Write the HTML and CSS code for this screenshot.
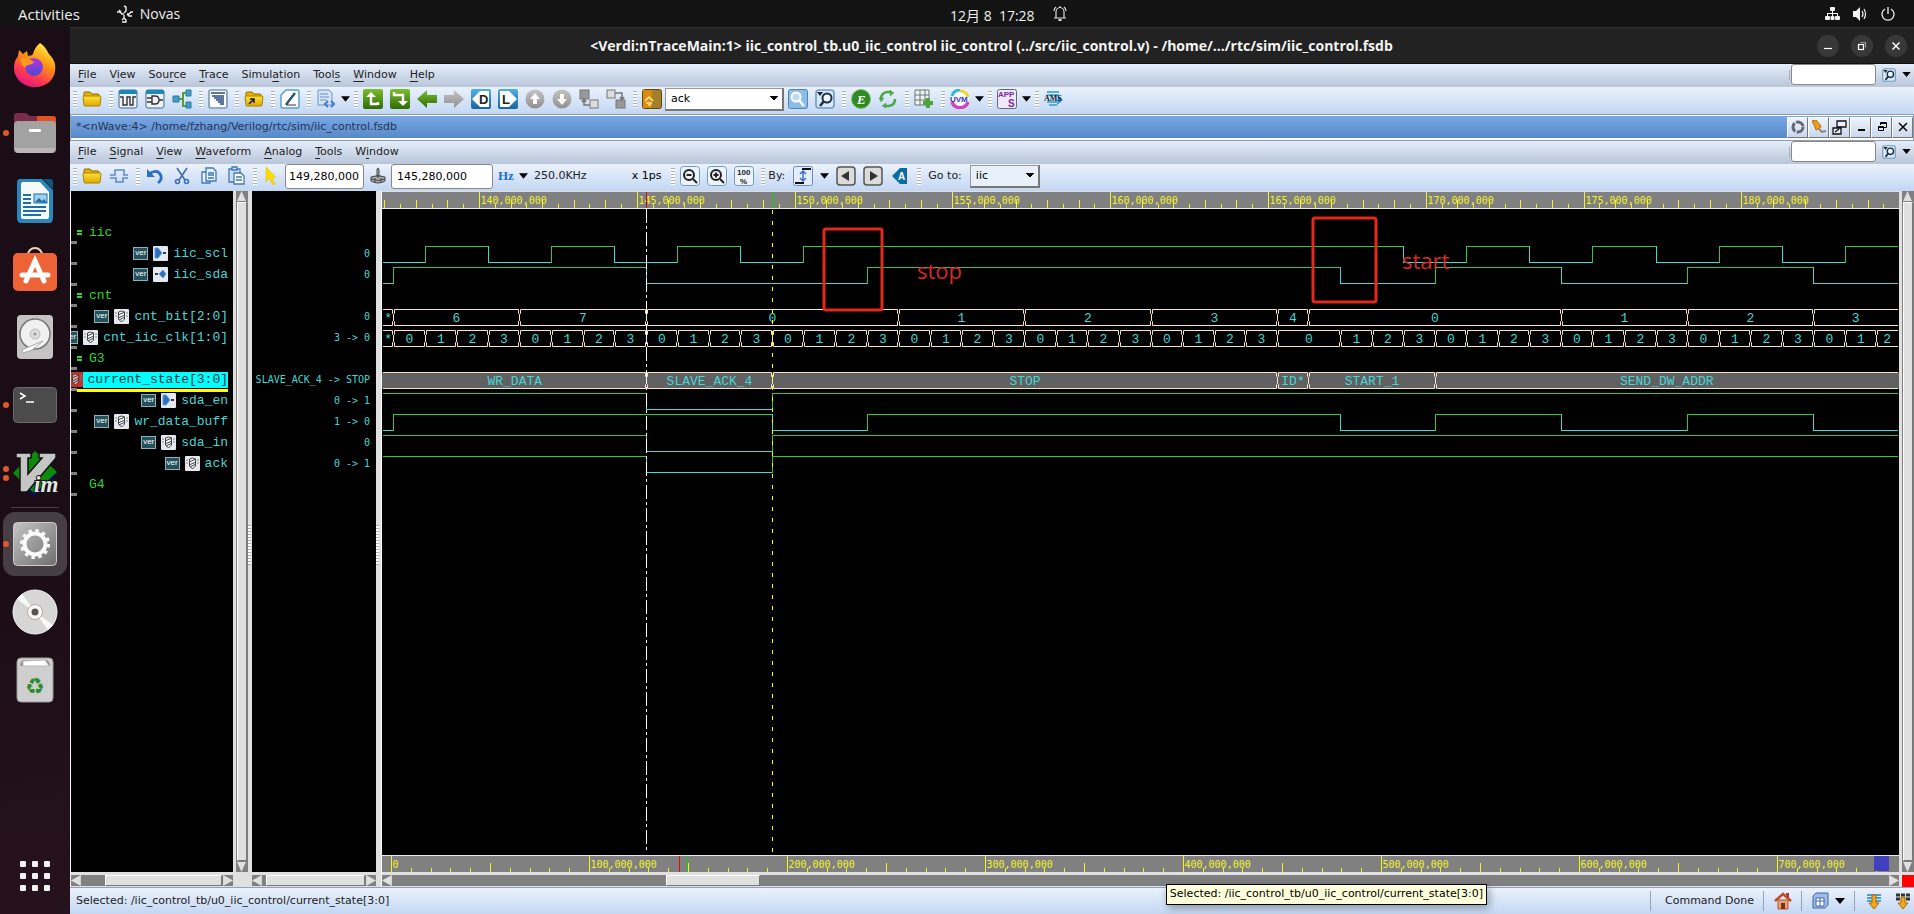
FILE: index.html
```html
<!DOCTYPE html>
<html lang="en">
<head>
<meta charset="utf-8">
<title>Verdi nWave</title>
<link rel="stylesheet" href="styles.css">
</head>
<body>
<svg class="defs" width="0" height="0" aria-hidden="true">
  <defs>
    <linearGradient id="gold" x1="0" y1="0" x2="0" y2="1"><stop offset="0" stop-color="#ffe23c"/><stop offset="1" stop-color="#e0a800"/></linearGradient>
    <linearGradient id="leaf" x1="0" y1="0" x2="0" y2="1"><stop offset="0" stop-color="#7bbf2e"/><stop offset="1" stop-color="#2f6b05"/></linearGradient>
    <linearGradient id="steel" x1="0" y1="0" x2="0" y2="1"><stop offset="0" stop-color="#c4c4c4"/><stop offset="1" stop-color="#8f8f8f"/></linearGradient>
    <linearGradient id="sky" x1="0" y1="0" x2="0" y2="1"><stop offset="0" stop-color="#4fb0ea"/><stop offset="1" stop-color="#1763a5"/></linearGradient>
    <linearGradient id="flame" x1="0.8" y1="0" x2="0.3" y2="1"><stop offset="0" stop-color="#fff44f"/><stop offset="0.4" stop-color="#ff980e"/><stop offset="0.75" stop-color="#ff3750"/><stop offset="1" stop-color="#e31587"/></linearGradient>
    <linearGradient id="globe" x1="0" y1="0" x2="0" y2="1"><stop offset="0" stop-color="#b833e1"/><stop offset="1" stop-color="#4a4ad0"/></linearGradient>
    <linearGradient id="panel" x1="0" y1="0" x2="1" y2="1"><stop offset="0" stop-color="#c4c4c4"/><stop offset="1" stop-color="#6e6e6e"/></linearGradient>
    <symbol id="folder" viewBox="0 0 20 20"><path d="M2 4q0-1 1-1h5l2 2h6q1 0 1 1v2H2z" fill="#e8b400" stroke="#8a6a00"/><path d="M1 8q0-1 1-1h16q1 0 1 1l-1 8q0 1-1 1H3q-1 0-1-1z" fill="url(#gold)" stroke="#a88200"/></symbol>
    <symbol id="find" viewBox="0 0 20 20"><rect x="1" y="1" width="18" height="18" rx="3" fill="#dce9f5" stroke="#6d9cc4" stroke-width="1.6"/><path d="M2 3h6L5 7z" fill="#223"/><circle cx="12" cy="9" r="4.500" fill="#fff" fill-opacity=".6" stroke="#1d3347" stroke-width="2"/><path d="M9 12l-4 5" stroke="#1d3347" stroke-width="2.6"/></symbol>
    <symbol id="caret" viewBox="0 0 10 6"><path d="M0 0h10L5 6z" fill="#000"/></symbol>
    <symbol id="reg" viewBox="0 0 15 15"><rect width="15" height="15" rx="1" fill="var(--chip)"/><path d="M4.500 3l3-1 3 1v7l-3 3-3-3z" fill="#fff" fill-opacity=".6" stroke="#444"/><path d="M4 6l7-3M4 9l7-3M5 11l6-3" stroke="#444"/><path d="M1 4h2M1 7h2M12 4h2M12 7h2" stroke="#888"/></symbol>
    <symbol id="port-out" viewBox="0 0 15 15"><rect width="15" height="15" rx="1" fill="var(--chip)"/><path d="M2 2h3l4 5-4 5H2z" fill="#2b6fbd" stroke="#5a9ae0"/><path d="M10 7h3" stroke="#000" stroke-width="1.500"/></symbol>
    <symbol id="port-io" viewBox="0 0 15 15"><rect width="15" height="15" rx="1" fill="var(--chip)"/><path d="M6 7l4-4 3 4-3 4z" fill="#2b6fbd" stroke="#5a9ae0"/><path d="M2 7h3" stroke="#000" stroke-width="1.500"/></symbol>
  </defs>
</svg>

<header class="topbar">
  <button class="top-item activities">Activities</button>
  <button class="top-item app-name">
    <svg width="16" height="18" viewBox="0 0 16 18" fill="none" stroke="#eee" stroke-width="1.400"><path d="M7 1l2 1v4l-2 2M0 7h3l2 2h2M2 5l2 2M10 9h2l2-2h2M10 9l2 2h3M7 10v3l-2 2M7 13l2 2v2H5"/></svg>
    Novas</button>
  <div class="clock"><time>12月 8&nbsp; 17:28</time>
    <svg width="14" height="17" viewBox="0 0 14 17" fill="none" stroke="#ddd" stroke-width="1.200"><path d="M1 13h12M3 13V7a4 4.500 0 0 1 8 0v6M1 6a5 5 0 0 1 2-4M13 6a5 5 0 0 0-2-4M6 2h2"/><path d="M5.500 15h3" stroke-width="2"/></svg>
  </div>
  <div class="tray">
    <svg width="15" height="14" viewBox="0 0 15 14" fill="#f2f2f2"><rect x="5" y="0" width="5" height="4" rx="1"/><rect x="0" y="9" width="5" height="4" rx="1"/><rect x="5.500" y="9" width="4" height="4" rx="1"/><rect x="10" y="9" width="5" height="4" rx="1"/><path d="M7 4h1v2h5v3h-1V7H8v2H7V7H3v2H2V6h5z"/></svg>
    <svg width="15" height="14" viewBox="0 0 15 14" fill="#f2f2f2"><path d="M0 4h3l4-4v14l-4-4H0z"/><path d="M9 4q2 3 0 6M11 2q3 5 0 10" fill="none" stroke="#f2f2f2" stroke-width="1.200"/></svg>
    <svg width="14" height="14" viewBox="0 0 14 14" fill="none" stroke="#f2f2f2" stroke-width="1.300"><path d="M4 2a6 6 0 1 0 6 0M7 0v7"/></svg>
  </div>
</header>

<div class="desktop">
  <nav class="dock" aria-label="Dock">
    <button class="dock-item" aria-label="Firefox"><svg width="44" height="46" viewBox="0 0 44 46"><path d="M27 1c6 4 7 8 9 11 5 5 7 10 6 17-1 9-9 16-20 16S1 37 1 26c0-6 2-9 4-12l1-6 4 4 4-3 1 5c3-1 4 0 5-2 1-4 3-8 7-11z" fill="url(#flame)"/><circle cx="21" cy="25" r="9" fill="url(#globe)"/><path d="M7 17c6-3 9 0 14 3-1 3-6 2-8 4-1 3-2 1-3 0s-2-4-3-7z" fill="#ff9a1c"/></svg></button>
    <button class="dock-item running" aria-label="Files"><svg width="44" height="42" viewBox="0 0 44 42"><path d="M1 4q0-3 3-3h9l4 3h23q3 0 3 3v12H1z" fill="#7a2a4a"/><path d="M24 4h16q3 0 3 3v12H24z" fill="#e2511f"/><rect x="1" y="9" width="42" height="32" rx="4" fill="#a2a2a2"/><path d="M2 36h40q0 5-4 5H6q-4 0-4-5z" fill="#b8b8b8"/><rect x="16" y="17" width="12" height="3" rx="1" fill="#fff"/></svg></button>
    <button class="dock-item" aria-label="Writer"><svg width="38" height="46" viewBox="0 0 38 46"><path d="M4 1h22l11 11v28q0 5-4 5H5q-4 0-4-5V5q0-4 3-4z" fill="#2a86bb"/><path d="M6 4h18l9 10v24q0 3-2 3H7q-2 0-2-2V6z" fill="#f6f9fb"/><path d="M27 1h7q3 0 3 3v7z" fill="#0d567f"/><rect x="18" y="16" width="13" height="9" fill="#9fd0f2" stroke="#1d6fa5"/><path d="M19 24l4-4 3 3 2-2 3 4z" fill="#1d6fa5"/><path d="M7 17h8M7 21h8M7 25h8M7 29h23M7 33h23M7 37h18" stroke="#1d6fa5" stroke-width="2"/></svg></button>
    <button class="dock-item" aria-label="Software"><svg width="44" height="44" viewBox="0 0 44 44"><path d="M15 8a7 7 0 0 1 14 0" fill="none" stroke="#ecd5b4" stroke-width="2"/><rect y="6" width="44" height="38" rx="5" fill="#ed6335"/><path d="M13 34l9-20 9 20M9 28h26" fill="none" stroke="#fff" stroke-width="5" stroke-linecap="round"/></svg></button>
    <button class="dock-item" aria-label="Disks"><svg width="38" height="46" viewBox="0 0 38 46"><rect x="1" y="1" width="36" height="44" rx="4" fill="#c4c4c4"/><circle cx="19" cy="20" r="15" fill="#f1f1f1" stroke="#777" stroke-width="1.500"/><circle cx="19" cy="20" r="5" fill="#ddd" stroke="#bbb"/><circle cx="19" cy="20" r="1.500" fill="#999"/><path d="M7 39l9-3 11-9-12 5-9 4z" fill="#fff" stroke="#aaa"/></svg></button>
    <button class="dock-item running" aria-label="Terminal"><svg width="44" height="36" viewBox="0 0 44 36"><rect x="0.500" y="0.500" width="43" height="35" rx="4" fill="#4b4b4b" stroke="#6a6a6a"/><path d="M7 6l5 3-5 3M13 15h8" fill="none" stroke="#fff" stroke-width="1.500"/></svg></button>
    <button class="dock-item running twice" aria-label="Vim"><svg width="46" height="46" viewBox="0 0 46 46"><path d="M23 1l22 21-22 23L1 23z" fill="#0d8a0d"/><path d="M10 34l13 11 20-20" fill="none" stroke="#00106a" stroke-width="2"/><path d="M4 3h15v5h-3v16L30 8h-3V3h17v5L15 42H8V8H4z" fill="#c6c6c6" stroke="#111" stroke-width="1.500"/><text class="vim" x="22" y="42">im</text></svg></button>
    <hr class="dock-rule">
    <button class="dock-item running active" aria-label="Settings"><svg width="44" height="44" viewBox="0 0 44 44"><rect x="0.500" y="0.500" width="43" height="43" rx="4" fill="url(#panel)" stroke="#ccc"/><circle cx="22" cy="22" r="10.500" fill="none" stroke="#fafafa" stroke-width="4"/><circle cx="22" cy="22" r="13.500" fill="none" stroke="#fafafa" stroke-width="3" stroke-dasharray="3.500 3.568"/></svg></button>
    <button class="dock-item" aria-label="Disc"><svg width="46" height="46" viewBox="0 0 46 46"><circle cx="23" cy="23" r="22" fill="#d6d6d6" stroke="#f4f4f4"/><path d="M23 23L5 10l5-5zM23 23l18 13-5 5z" fill="#fafafa"/><circle cx="23" cy="23" r="7.500" fill="#f8f8f8" stroke="#b9ab9a"/><circle cx="23" cy="23" r="3.500" fill="#555"/></svg></button>
    <button class="dock-item" aria-label="Trash"><svg width="38" height="46" viewBox="0 0 38 46"><rect x="1" y="1" width="36" height="44" rx="4" fill="#cfcfcf" stroke="#9a9a9a"/><path d="M4 9q1-6 4-6h22q3 0 4 6z" fill="#8d8d8d"/><path d="M7 4l22-1 4 6H7z" fill="#fff" stroke="#bbb"/><text class="recycle" x="19" y="37">♻</text></svg></button>
    <button class="dock-item apps" aria-label="Show applications"><svg width="30" height="30" viewBox="0 0 30 30" fill="#f2f2f2"><rect width="6" height="6" rx="1"/><rect x="12" width="6" height="6" rx="1"/><rect x="24" width="6" height="6" rx="1"/><rect y="12" width="6" height="6" rx="1"/><rect x="12" y="12" width="6" height="6" rx="1"/><rect x="24" y="12" width="6" height="6" rx="1"/><rect y="24" width="6" height="6" rx="1"/><rect x="12" y="24" width="6" height="6" rx="1"/><rect x="24" y="24" width="6" height="6" rx="1"/></svg></button>
  </nav>

  <main class="window">
    <div class="titlebar">
      <h1>&lt;Verdi:nTraceMain:1&gt; iic_control_tb.u0_iic_control iic_control (../src/iic_control.v) - /home/.../rtc/sim/iic_control.fsdb</h1>
      <div class="controls">
        <button aria-label="Minimize"><svg width="22" height="22" viewBox="0 0 22 22"><path d="M7 13.500h8" stroke="#fff" stroke-width="1.200"/></svg></button>
        <button aria-label="Restore"><svg width="22" height="22" viewBox="0 0 22 22" fill="none" stroke="#fff" stroke-width="1.200"><rect x="7.500" y="9.500" width="5" height="5"/><path d="M9.500 7.500h5v5" stroke="#999"/></svg></button>
        <button aria-label="Close"><svg width="22" height="22" viewBox="0 0 22 22"><path d="M7.500 7.500l7 7m0-7l-7 7" stroke="#fff" stroke-width="1.500"/></svg></button>
      </div>
    </div>

    <div class="menubar">
      <button><u>F</u>ile</button><button>V<u>i</u>ew</button><button>Sou<u>r</u>ce</button><button><u>T</u>race</button><button>Simul<u>a</u>tion</button><button>Tool<u>s</u></button><button><u>W</u>indow</button><button><u>H</u>elp</button>
      <div class="quick"><i class="bar"></i><input type="text" aria-label="Search commands"><svg width="14" height="14"><use href="#find"/></svg><svg width="9" height="5"><use href="#caret"/></svg></div>
    </div>

    <div class="toolbar">
      <i class="grip"></i>
      <button aria-label="Open"><svg width="20" height="20"><use href="#folder"/></svg></button>
      <i class="grip"></i>
      <button aria-label="New waveform"><svg width="20" height="20" viewBox="0 0 20 20"><rect x="1" y="1" width="18" height="18" rx="2" fill="#eef3f7" stroke="#3c6d8c"/><path d="M1 1h18v4H1z" fill="#2186b5"/><path d="M2 8h3v8h4V8h3v8h3V8h3" fill="none" stroke="#333" stroke-width="1.400"/></svg></button>
      <button aria-label="New schematic"><svg width="20" height="20" viewBox="0 0 20 20"><rect x="1" y="1" width="18" height="18" rx="2" fill="#eef3f7" stroke="#3c6d8c"/><path d="M1 1h18v4H1z" fill="#2186b5"/><path d="M7 7h3q4 0 4 4t-4 4H7zM2 9h5M2 13h5M14 11h4" fill="none" stroke="#333" stroke-width="1.400"/></svg></button>
      <button aria-label="Hierarchy"><svg width="20" height="20" viewBox="0 0 20 20"><path d="M5 10h5M15 4h-4v13h4" fill="none" stroke="#5b9b3b" stroke-width="2"/><path d="M1 7h6v6H1zM14 1h5v6h-5zM14 13h5v6h-5z" fill="#3f9fc6" stroke="#2a7ca0"/></svg></button>
      <i class="grip"></i>
      <button aria-label="Message"><svg width="20" height="20" viewBox="0 0 20 20"><rect x="1" y="1" width="18" height="18" rx="2" fill="#fff" stroke="#7798b4" stroke-width="1.600"/><path d="M3 4h14M4 7h12M6 9h10M8 11h8M10 13h6M12 15h4" stroke="#2c4b7c" stroke-width="1.300"/></svg></button>
      <i class="grip"></i>
      <button aria-label="Open file list"><svg width="20" height="20"><use href="#folder"/><path d="M5 15l5-5M6 10h4v4" fill="none" stroke="#222" stroke-width="1.600"/></svg></button>
      <i class="grip"></i>
      <button aria-label="Edit"><svg width="20" height="20" viewBox="0 0 20 20"><path d="M6 1h11q2 0 2 2v14q0 2-2 2H3q-2 0-2-2V6z" fill="#fff" stroke="#5ba0ca" stroke-width="1.500"/><path d="M15 4L8 13l-2 3" stroke="#24577c" stroke-width="2.400"/><path d="M7 16h9" stroke="#333"/></svg></button>
      <i class="grip"></i>
      <button aria-label="Source"><svg width="20" height="20" viewBox="0 0 20 20"><path d="M2 1h11l3 3v12H2z" fill="#d5e3f4" stroke="#6b94c4"/><path d="M4 5h8M4 8h9M4 11h7" stroke="#6b94c4"/><path d="M12 12l-3 3 3 3M15 12l3 3-3 3" fill="none" stroke="#3d7cc9" stroke-width="2"/></svg></button>
      <svg class="caret" width="9" height="6"><use href="#caret"/></svg>
      <i class="grip"></i>
      <button aria-label="Driver scope"><svg width="20" height="20" viewBox="0 0 20 20"><rect width="20" height="20" rx="2" fill="url(#leaf)"/><path d="M8 6v9h6M15 13v3" fill="none" stroke="#fff" stroke-width="2.400"/><path d="M3 8l5-5 5 5z" fill="#fff"/></svg></button>
      <button aria-label="Load scope"><svg width="20" height="20" viewBox="0 0 20 20"><rect width="20" height="20" rx="2" fill="url(#leaf)"/><path d="M4 3v3h9v7" fill="none" stroke="#fff" stroke-width="2.400"/><path d="M8 12h10l-5 5z" fill="#fff"/></svg></button>
      <button aria-label="Back"><svg width="20" height="20" viewBox="0 0 20 20"><path d="M0 10l10-9v5h10v8H10v5z" fill="url(#leaf)"/></svg></button>
      <button aria-label="Forward"><svg width="20" height="20" viewBox="0 0 20 20"><path d="M20 10L10 1v5H0v8h10v5z" fill="url(#steel)"/></svg></button>
      <button aria-label="Driver"><svg width="20" height="20" viewBox="0 0 20 20"><rect width="20" height="20" rx="2" fill="url(#sky)"/><path d="M1 10l8-8h9v16H9z" fill="#fff"/><text class="glyph" x="8" y="15">D</text></svg></button>
      <button aria-label="Load"><svg width="20" height="20" viewBox="0 0 20 20"><rect width="20" height="20" rx="2" fill="url(#sky)"/><path d="M19 10l-8-8H2v16h9z" fill="#fff"/><text class="glyph" x="4" y="15">L</text></svg></button>
      <button aria-label="Up"><svg width="20" height="20" viewBox="0 0 20 20"><circle cx="10" cy="10" r="9.500" fill="url(#steel)"/><path d="M10 4l5 6h-3v5H8v-5H5z" fill="#fff"/></svg></button>
      <button aria-label="Down"><svg width="20" height="20" viewBox="0 0 20 20"><circle cx="10" cy="10" r="9.500" fill="url(#steel)"/><path d="M10 16l5-6h-3V5H8v5H5z" fill="#fff"/></svg></button>
      <button aria-label="Previous instance"><svg width="20" height="20" viewBox="0 0 20 20" fill="none" stroke="#777"><rect x="1" y="1" width="9" height="9" fill="#999"/><rect x="11" y="11" width="8" height="8" fill="#ddd"/><path d="M5 10v6h6M3 13l2-3 2 3" stroke-width="1.500"/></svg></button>
      <button aria-label="Next instance"><svg width="20" height="20" viewBox="0 0 20 20" fill="none" stroke="#777"><rect x="1" y="1" width="8" height="8" fill="#ddd"/><rect x="10" y="11" width="9" height="8" fill="#999"/><path d="M9 4h7v7M14 8l2 3 2-3" stroke-width="1.500"/></svg></button>
      <i class="grip"></i>
      <button aria-label="Bookmark"><svg width="20" height="20" viewBox="0 0 20 20"><rect x="0.500" y="0.500" width="19" height="19" rx="2" fill="#a5802a" stroke="#5e4712"/><path d="M1 1h9v18H1z" fill="#d98d0c"/><path d="M3 12l4-4 4 4M4 14h6M6 16h3" fill="none" stroke="#ffe9a0" stroke-width="1.500"/></svg></button>
      <select class="combo find-combo" aria-label="Find string"><option>ack</option></select>
      <button aria-label="Search"><svg width="20" height="20" viewBox="0 0 20 20"><rect x="0.500" y="0.500" width="19" height="19" rx="2" fill="#8cbde6" stroke="#4c83b5"/><circle cx="8" cy="8" r="4.500" fill="#b9dbf5" stroke="#fff" stroke-width="2"/><path d="M11 11l5 6" stroke="#fff" stroke-width="2.500"/></svg></button>
      <button aria-label="Search options"><svg width="20" height="20"><use href="#find"/></svg></button>
      <i class="grip"></i>
      <button aria-label="Emulation"><svg width="20" height="20" viewBox="0 0 20 20"><circle cx="10" cy="10" r="9.500" fill="#2f8a22" stroke="#7cc46d"/><text class="glyph light slant" x="6" y="15">E</text></svg></button>
      <button aria-label="Reload"><svg width="20" height="20" viewBox="0 0 20 20" fill="none" stroke="#4fa84a" stroke-width="2.600"><path d="M3 10q0-6 6-7h4M17 10q0 6-6 7H7"/><path d="M12 1l4 3-4 3zM8 14l-4 3 4 2zM1 9l2 4 3-4z" fill="#4fa84a" stroke-width="0.500"/></svg></button>
      <i class="grip"></i>
      <button aria-label="Add table"><svg width="20" height="20" viewBox="0 0 20 20"><path d="M1 1h14v15H1zM1 6h14M1 11h14M6 1v15M11 1v15" fill="#f0f4f0" stroke="#677"/><path d="M14 9v10M9 14h10" stroke="#4aa53a" stroke-width="4"/></svg></button>
      <i class="grip"></i>
      <button aria-label="UVM"><svg width="20" height="20" viewBox="0 0 20 20"><circle cx="10" cy="10" r="9" fill="#fff"/><path d="M2 7a8.500 8.500 0 0 1 8-6" stroke="#2fb7e8" stroke-width="3" fill="none"/><path d="M10 2a8.500 8.500 0 0 1 8 6" stroke="#e8d82f" stroke-width="3" fill="none"/><path d="M2 13a8.500 8.500 0 0 0 16 0" stroke="#d23fc4" stroke-width="3.500" fill="none"/><text class="glyph tiny blue" x="0" y="13">UVM</text></svg></button>
      <svg class="caret" width="9" height="6"><use href="#caret"/></svg>
      <i class="grip"></i>
      <button aria-label="Apps"><svg width="20" height="20" viewBox="0 0 20 20"><rect x="0.500" y="0.500" width="19" height="19" rx="2" fill="#efe8f6" stroke="#667"/><text class="glyph tiny purple" x="1" y="8">APP</text><text class="glyph small purple" x="11" y="18">S</text></svg></button>
      <svg class="caret" width="9" height="6"><use href="#caret"/></svg>
      <i class="grip"></i>
      <button aria-label="AMS"><svg width="20" height="20" viewBox="0 0 20 20"><path d="M3 3h12M3 6h12M3 13h10M5 16h8" stroke="#57aed8" stroke-width="2"/><path d="M14 7l5 4-6 5z" fill="#2f93c4"/><text class="glyph serif" x="0" y="12">AMS</text></svg></button>
    </div>

    <div class="subtitle">
      <h2>*&lt;nWave:4&gt; /home/fzhang/Verilog/rtc/sim/iic_control.fsdb</h2>
      <div class="mdi">
        <button aria-label="Sync"><svg width="14" height="14" viewBox="0 0 14 14" fill="none" stroke="#667" stroke-width="3"><circle cx="7" cy="7" r="5" stroke-dasharray="9 1.500"/></svg></button>
        <button aria-label="Pin"><svg width="15" height="14" viewBox="0 0 15 14"><path d="M1 1l4-1 5 6-1 2-4 2-1-3z" fill="#f09b1a" stroke="#b66c05"/><path d="M8 9l3 3 4-1" stroke="#888" stroke-width="2" fill="none"/></svg></button>
        <button aria-label="Undock"><svg width="15" height="15" viewBox="0 0 15 15" fill="#eef" stroke="#111" stroke-width="1.300"><path d="M5 1h9v6H5zM1 8h8v6H1zM3 12l4-3"/></svg></button>
        <button aria-label="Minimize pane"><svg width="12" height="12" viewBox="0 0 12 12"><path d="M3 9h7" stroke="#000" stroke-width="2"/></svg></button>
        <button aria-label="Restore pane"><svg width="12" height="12" viewBox="0 0 12 12" fill="none" stroke="#000"><path d="M4.500 4V1.500h6v5H8M4 2.500h6M2.500 5.500h5v4h-5zM2 6.500h6"/></svg></button>
        <button aria-label="Close pane"><svg width="12" height="12" viewBox="0 0 12 12"><path d="M2 2l8 8m0-8l-8 8" stroke="#000" stroke-width="1.500"/></svg></button>
      </div>
    </div>

    <div class="menubar">
      <button><u>F</u>ile</button><button><u>S</u>ignal</button><button><u>V</u>iew</button><button><u>W</u>aveform</button><button><u>A</u>nalog</button><button><u>T</u>ools</button><button>W<u>i</u>ndow</button>
      <div class="quick"><i class="bar"></i><input type="text" aria-label="Search wave commands"><svg width="14" height="14"><use href="#find"/></svg><svg width="9" height="5"><use href="#caret"/></svg></div>
    </div>

    <div class="toolbar">
      <i class="grip"></i>
      <button aria-label="Open dump file"><svg width="20" height="20"><use href="#folder"/></svg></button>
      <button aria-label="Get signals"><svg width="20" height="20" viewBox="0 0 20 20" fill="none" stroke="#5f8fc4" stroke-width="1.600"><path d="M1 9h5V4h9v5h4M1 12h6v4h7v-4h5"/></svg></button>
      <i class="grip"></i>
      <button aria-label="Undo"><svg width="20" height="20" viewBox="0 0 20 20"><path d="M4 8q9-6 12 2 1 4-3 7" fill="none" stroke="#2d6fc2" stroke-width="2.800"/><path d="M2 3v8h8z" fill="#2d6fc2"/></svg></button>
      <button aria-label="Cut"><svg width="20" height="20" viewBox="0 0 20 20" fill="none" stroke="#3c6fae" stroke-width="1.600"><path d="M5 2l8 12M15 2L7 14"/><circle cx="5.500" cy="15.500" r="2"/><circle cx="14.500" cy="15.500" r="2"/></svg></button>
      <button aria-label="Copy"><svg width="20" height="20" viewBox="0 0 20 20" fill="#e8f0fa" stroke="#3c78b8" stroke-width="1.300"><path d="M3 6h8v11H3z"/><path d="M7 2h7l3 3v10H7zM9 7h6M9 9h6M9 12h6"/></svg></button>
      <button aria-label="Paste"><svg width="20" height="20" viewBox="0 0 20 20" fill="#cfe0f4" stroke="#3c78b8" stroke-width="1.300"><path d="M3 3h11v13H3z"/><path d="M6 1h5v3H6z"/><path d="M8 7h7l3 3v8H8zM10 11h6M10 14h6" fill="#fff"/></svg></button>
      <i class="grip"></i>
      <button class="slim" aria-label="Cursor"><svg width="20" height="20" viewBox="0 0 20 20"><path d="M6 1v15l3-4 4 7 2-1-3-6 4-1z" fill="#ffdc00" stroke="#e0b800" stroke-width="0.500"/></svg></button>
      <input class="time cursor-time" type="text" value="149,280,000" aria-label="Cursor time">
      <button class="slim" aria-label="Clear marker"><svg width="18" height="20" viewBox="0 0 18 20"><path d="M8 3q2-2 2 1v7H8zM2 11q7-3 14 0v4q-7 4-14 0z" fill="#a8acb0" stroke="#444"/><path d="M2 13q7 3 14 0M6 12v5M12 12v5" fill="none" stroke="#444"/></svg></button>
      <input class="time marker-time" type="text" value="145,280,000" aria-label="Marker time">
      <span class="hz">Hz</span><svg class="caret" width="9" height="6"><use href="#caret"/></svg>
      <output class="freq">250.0KHz</output>
      <span class="unit">x 1ps</span>
      <i class="grip"></i>
      <button aria-label="Zoom out"><svg width="20" height="20" viewBox="0 0 20 20"><rect x="0.500" y="0.500" width="19" height="19" rx="3" fill="#eef4fb" stroke="#6d9cc4"/><circle cx="9" cy="9" r="5" fill="none" stroke="#222" stroke-width="2"/><path d="M6.500 9h5M13 13l4 4" stroke="#222" stroke-width="2"/></svg></button>
      <button aria-label="Zoom in"><svg width="20" height="20" viewBox="0 0 20 20"><rect x="0.500" y="0.500" width="19" height="19" rx="3" fill="#eef4fb" stroke="#6d9cc4"/><circle cx="9" cy="9" r="5" fill="none" stroke="#222" stroke-width="2"/><path d="M6.500 9h5M9 6.500v5M13 13l4 4" stroke="#222" stroke-width="2"/></svg></button>
      <button aria-label="Zoom all"><svg width="20" height="20" viewBox="0 0 20 20"><rect x="0.500" y="0.500" width="19" height="19" rx="3" fill="#eef4fb" stroke="#6d9cc4"/><text class="glyph tiny" x="3" y="9">100</text><text class="glyph tiny" x="6" y="18">%</text></svg></button>
      <i class="grip"></i>
      <span class="by">By:</span>
      <button aria-label="Any change"><svg width="20" height="20" viewBox="0 0 20 20"><rect x="0.500" y="0.500" width="19" height="19" rx="2" fill="#e4eefb" stroke="#6d8cc4"/><path d="M2 17h9M9 3h9" stroke="#111" stroke-width="2"/><path d="M10 5v10M7 8l3-3 3 3M7 12l3 3 3-3" fill="none" stroke="#3a6fd0" stroke-width="1.500"/></svg></button>
      <svg class="caret roomy" width="9" height="6"><use href="#caret"/></svg>
      <button aria-label="Search backward"><svg width="20" height="20" viewBox="0 0 20 20"><rect x="1" y="1" width="18" height="18" rx="3" fill="#dcdcdc" stroke="#555" stroke-width="1.500"/><path d="M13 5v10l-8-5z" fill="#333"/></svg></button>
      <button aria-label="Search forward"><svg width="20" height="20" viewBox="0 0 20 20"><rect x="1" y="1" width="18" height="18" rx="3" fill="#dcdcdc" stroke="#555" stroke-width="1.500"/><path d="M7 5v10l8-5z" fill="#333"/></svg></button>
      <button aria-label="Annotate"><svg width="20" height="20" viewBox="0 0 20 20"><path d="M2 10l8-8h7v16h-7z" fill="#0b6a9f"/><text class="glyph light small" x="8" y="14">A</text></svg></button>
      <i class="grip"></i>
      <label class="goto" for="goto">Go to:</label>
      <select class="combo goto-combo" id="goto"><option>iic</option></select>
    </div>

    <section class="panes">
      <div class="pane signals">
        <ul class="screen rows" id="signals"></ul>
        <div class="hscroll"><i class="arrow left"></i><i class="thumb"></i><i class="arrow right"></i></div>
      </div>
      <div class="vscroll"><i class="arrow up"></i><i class="thumb"></i><i class="arrow down"></i></div>
      <i class="splitter"></i>
      <div class="pane values">
        <ul class="screen rows" id="values"></ul>
        <div class="hscroll"><i class="arrow left"></i><i class="thumb"></i><i class="arrow right"></i></div>
      </div>
      <i class="splitter wide"></i>
      <div class="pane waves">
        <svg class="ruler" id="ruler"></svg>
        <div class="screen plot" id="plot"></div>
        <svg class="overview" id="overview"></svg>
        <div class="hscroll"><i class="arrow left"></i><i class="thumb"></i><i class="arrow right"></i></div>
      </div>
      <div class="vscroll last"><i class="arrow up"></i><i class="thumb"></i><i class="arrow down"></i></div>
    </section>

    <footer class="status">
      <p>Selected: /iic_control_tb/u0_iic_control/current_state[3:0]</p>
      <div class="tip" role="tooltip">Selected: /iic_control_tb/u0_iic_control/current_state[3:0]</div>
      <div class="status-tools">
        <span class="done">Command Done</span>
        <span class="cell"><button aria-label="Home"><svg width="18" height="18" viewBox="0 0 18 18"><path d="M4 8h10v9H4z" fill="#e9a27c" stroke="#b5532b"/><path d="M1 9l8-7 8 7" fill="none" stroke="#c04a25" stroke-width="2.500"/><path d="M7 11h4v6H7z" fill="#7c2f14"/><path d="M12 2h2v3" stroke="#a33" stroke-width="2" fill="none"/></svg></button></span>
        <span class="cell"><button aria-label="Windows"><svg width="18" height="18" viewBox="0 0 18 18"><path d="M4 1h12v12l-3 3H1V4z" fill="#9fbbe8" stroke="#3f66a8"/><path d="M4 6h8v8H4zM4 9h8M8 6v8" fill="#fff" stroke="#3f66a8"/></svg></button><svg width="10" height="6"><use href="#caret"/></svg></span>
        <span class="cell"><button aria-label="Load all"><svg width="18" height="18" viewBox="0 0 18 18"><path d="M2 3h14M2 6h14M2 9h14" stroke="#4aa0d0" stroke-width="2"/><path d="M7 3h4v8h3l-5 6-5-6h3z" fill="#f5a81c" stroke="#a66b05"/></svg></button><button aria-label="Load part"><svg width="18" height="18" viewBox="0 0 18 18"><path d="M2 3h14M2 7h14" stroke="#333" stroke-width="3" stroke-dasharray="4 1"/><path d="M7 5h4v6h3l-5 6-5-6h3z" fill="#f5a81c" stroke="#a66b05"/></svg></button></span>
      </div>
    </footer>
  </main>
</div>
<script src="app.js"></script>
</body>
</html>
```

FILE: styles.css
```css
* { box-sizing: border-box; }
:root {
  --ui: "DejaVu Sans", sans-serif;
  --shell: "Open Sans", "Noto Sans", "Noto Sans CJK SC", sans-serif;
  --mono: "Liberation Mono", "DejaVu Sans Mono", monospace;
  --frame: #e0e0e0;
  --trough: #808080;
  --chip: #e6eaf0;
}
body {
  margin: 0;
  height: 100vh;
  display: flex;
  flex-direction: column;
  overflow: hidden;
  background: #131313;
  font: 11px/14px var(--ui);
  color: #222;
}
.defs { position: absolute; }
button, input, select { font: inherit; color: inherit; margin: 0; }
button { border: 0; padding: 0; background: none; }
svg { display: block; flex: none; }
h1, h2, p, ul { margin: 0; padding: 0; }

/* desktop shell */
.topbar {
  height: 27px;
  flex: none;
  display: grid;
  grid-template-columns: auto auto 1fr;
  align-items: center;
  position: relative;
  padding: 0 19px 0 18px;
  color: #eee;
  font: 14px/20px var(--shell);
}
.activities { font-size: 15px; }
.app-name { display: flex; align-items: center; gap: 7px; margin-left: 37px; }
.clock {
  position: absolute;
  left: calc(50% - 7px);
  top: 0;
  height: 27px;
  display: flex;
  align-items: center;
  gap: 18px;
}
.clock time { padding-top: 4px; }
.tray { display: flex; gap: 13px; justify-self: end; }
.desktop { flex: 1; min-height: 0; display: flex; }
.dock {
  width: 70px;
  flex: none;
  display: flex;
  flex-direction: column;
  align-items: center;
  padding: 4px 3px 2px;
  background: linear-gradient(170deg, #1b0d15 60%, #26121d);
}
.dock-item {
  width: 64px;
  height: 64px;
  margin: 2px 0;
  display: grid;
  place-items: center;
  position: relative;
  border-radius: 12px;
}
.dock-item.active { background: #473d44; }
.dock-item.running::before {
  content: "";
  position: absolute;
  left: 0;
  top: 29px;
  width: 6px;
  height: 6px;
  border-radius: 50%;
  background: #e2592a;
}
.dock-item.twice::before { top: 25px; box-shadow: 0 9px #e2592a; }
.dock-rule { width: 48px; height: 1px; margin: 0 0 2px; border: 0; background: #4b4048; }
.dock-item.apps { margin-top: auto; margin-bottom: 4px; }
.vim { font: italic bold 23px "Liberation Serif", serif; fill: #e4e4e4; stroke: #111; stroke-width: 2px; paint-order: stroke; }
.recycle { font: 22px "DejaVu Sans", sans-serif; fill: #2e8b2e; text-anchor: middle; }
.window { flex: 1; min-width: 0; display: flex; flex-direction: column; background: var(--frame); }
.titlebar {
  height: 37px;
  flex: none;
  display: grid;
  grid-template-columns: 1fr auto;
  align-items: center;
  padding-right: 7px;
  border-top: 1px solid #333;
  border-bottom: 1px solid #111;
  background: #222;
  color: #f4f4f4;
}
.titlebar h1 { font: bold 14px/20px var(--shell); text-align: center; padding-left: 96px; white-space: nowrap; }
.controls { display: flex; gap: 12px; }
.controls button { border-radius: 50%; background: #383838; }

/* menus and toolbars */
.menubar {
  height: 23px;
  flex: none;
  display: flex;
  align-items: center;
  gap: 13px;
  padding: 0 3px 2px 8px;
  background: linear-gradient(#e4edfa, #b9c6da);
}
.menubar u { text-underline-offset: 3px; }
.quick { margin-left: auto; display: flex; align-items: center; gap: 6px; }
.quick .bar { width: 1px; height: 10px; background: #aab; margin-right: -5px; }
.quick input { width: 85px; height: 21px; border: 1px solid #888; border-radius: 3px; background: #fff; }
.toolbar {
  height: 27px;
  flex: none;
  display: flex;
  align-items: center;
  gap: 7px;
  padding: 0 3px 3px;
  background: linear-gradient(#ebf2fc, #c3d7f3);
}
.grip {
  flex: none;
  width: 4px;
  height: 17px;
  margin-right: -2px;
  background: repeating-linear-gradient(#a9b2c0 0 1px, #fff 1px 3px);
}
.caret { margin: 0 -3px 0 -2px; }
.caret.roomy { margin: 0; }
.glyph { font: bold 13px "Liberation Sans", sans-serif; fill: #222; }
.glyph.light { fill: #fff; }
.glyph.slant { font-family: "Liberation Serif", serif; font-style: italic; }
.glyph.small { font-size: 10px; }
.glyph.tiny { font-size: 8px; }
.glyph.blue { fill: #3431d8; }
.glyph.purple { fill: #7a2ba8; }
.glyph.serif { font: bold 8px "Liberation Serif", serif; fill: #123; }
.combo {
  height: 23px;
  appearance: none;
  border: 1px solid #999;
  border-right: 2px solid #777;
  border-bottom: 2px solid #777;
  border-radius: 0;
  padding: 0 5px;
  color: #000;
  background-color: #fff;
  background-image:
    linear-gradient(to top left, transparent 50%, #000 50%),
    linear-gradient(to top right, transparent 50%, #000 50%);
  background-size: 4px 5px;
  background-position: right 4px center, right 8px center;
  background-repeat: no-repeat;
}
.find-combo { width: 119px; margin: 0 -3px 0 -4px; }
.goto-combo { width: 70px; background-color: #e8f0fa; }
.time { height: 25px; border: 1px solid #888; border-radius: 3px; background: #fff; color: #000; padding: 0 3px; }
.cursor-time { width: 79px; }
.marker-time { width: 102px; margin-left: -1px; padding: 0 5px; }
.slim { margin: 0 -2px; }
.hz { font: bold 13px/16px "Liberation Serif", serif; color: #1f6fd0; margin: 0 0 0 -2px; }
.freq { margin-left: 2px; }
.unit { margin: 0 3px 0 38px; color: #000; }
.by { margin: 0 1px 0 -2px; }
.goto { margin: 0 1px 0 2px; }
.subtitle {
  flex: none;
  height: 27px;
  display: flex;
  align-items: center;
  justify-content: space-between;
  padding-right: 1px;
  border-top: 2px solid #fff;
  border-bottom: 3px solid #fff;
  outline: 1px solid #8f9caf;
  outline-offset: -1px;
  background: linear-gradient(#78a8e6, #5788c8);
}
.subtitle h2 { font: 11px/14px var(--ui); color: #24364f; padding-left: 6px; }
.mdi { display: flex; }
.mdi button {
  width: 21px;
  height: 21px;
  display: grid;
  place-items: center;
  border: 1px solid #fff;
  border-right-color: #777;
  border-bottom-color: #777;
  background: linear-gradient(#edf3fb, #c9d8ee);
}

/* wave window */
.panes { flex: 1; min-height: 0; display: flex; border-left: 1px solid #f4f4f4; }
.pane { display: flex; flex-direction: column; flex: none; padding-bottom: 1px; }
.signals { width: 162px; }
.values { width: 124px; }
.waves { flex: 1; min-width: 0; padding-top: 1px; border-left: 1px solid #fff; }
.screen { flex: 1; min-height: 0; background: #000; overflow: hidden; list-style: none; position: relative; }
.rows { padding-top: 31px; }
.row { height: 21px; display: flex; align-items: center; justify-content: flex-end; position: relative; white-space: nowrap; color: #45d6d6; }
.signals .row { padding-right: 5px; font: 13px/16px var(--mono); gap: 5px; }
.signals .row::after { content: ""; position: absolute; left: 0; bottom: -1px; width: 6px; height: 3px; background: #808080; }
.signals .row.group { justify-content: flex-start; padding-left: 6px; gap: 7px; color: #2fd52f; }
.signals .row.last { padding-left: 18px; }
.group .mark { width: 5px; height: 5px; border: solid #2fd52f; border-width: 2px 0; }
.ver { width: 15px; height: 13px; flex: none; background: #24525c; border: 1px solid #8fb0b8; color: #fff; font: 8px/10px "Liberation Sans", sans-serif; text-align: center; }
.signals .row.picked { gap: 0; --chip: #c8302c; }
.picked .ver { margin-right: 5px; }
.picked .name { height: 16px; padding-left: 5px; background: #0ff; color: #003c3c; }
.picked::before { content: ""; position: absolute; left: 6px; right: 5px; bottom: -2px; height: 3px; background: #ff0; }
.values .row { padding-right: 6px; font: 10px/14px "DejaVu Sans Mono", monospace; }
.ruler, .overview { width: 100%; height: 17px; background: #808080; border-bottom: 1px solid #e8e8e8; overflow: hidden; }
.overview { border-bottom: 0; border-top: 1px solid #e8e8e8; }
.plot svg { position: absolute; inset: 0; width: 100%; height: 100%; }
.tick { stroke: #f2f22c; fill: none; }
.tick-label { fill: #f2f22c; font: 10px "DejaVu Sans Mono", monospace; }
.high { stroke: #35c835; }
.low { stroke: #45d6d6; }
.bus { stroke: #f6e2cd; fill: none; }
.bus-label { fill: #45d6d6; font: 13px var(--mono); text-anchor: middle; }
.cursor { stroke: #ff0; stroke-dasharray: 4 7; }
.marker { stroke: #fff; stroke-dasharray: 14 3 3 3; }
.note { fill: none; stroke: #e3291c; stroke-width: 3; }
.note-label { fill: #d9291f; font: 22px "Open Sans", sans-serif; }

/* scroll bars */
.hscroll { height: 11px; margin-top: 3px; flex: none; display: flex; background: var(--trough); }
.vscroll { width: 12px; margin: 0 0 15px 3px; flex: none; display: flex; flex-direction: column; background: var(--trough); position: relative; }
.thumb { background: var(--frame); border: 1px solid #fff; border-right-color: #777; border-bottom-color: #777; }
.vscroll .thumb { flex: 1; margin: 0 1px; }
.arrow { flex: none; width: 11px; height: 11px; background: var(--frame); }
.arrow.left { clip-path: polygon(0 50%, 90% 0, 90% 100%); }
.arrow.right { clip-path: polygon(100% 50%, 10% 0, 10% 100%); }
.arrow.up { clip-path: polygon(50% 0, 10% 90%, 90% 90%); }
.arrow.down { clip-path: polygon(50% 100%, 10% 10%, 90% 10%); }
.signals .thumb { width: 117px; margin-left: auto; }
.values .thumb { flex: 1; margin-left: 3px; }
.waves .thumb { width: 94px; margin-left: 18%; }
.waves .arrow.right { margin-left: auto; }
.vscroll.last::after { content: ""; position: absolute; left: 0; bottom: -15px; width: 12px; height: 12px; background: red; }
.splitter { width: 4px; flex: none; position: relative; }
.splitter.wide { width: 5px; }
.splitter::before { content: ""; position: absolute; left: 0; top: 48%; width: 3px; height: 40px; background: repeating-linear-gradient(#aaa 0 1px, #fff 1px 3px); }

/* status line */
.status {
  height: 27px;
  flex: none;
  display: flex;
  align-items: center;
  justify-content: space-between;
  position: relative;
  padding-left: 6px;
  border-top: 1px solid #8fa3c0;
  background: linear-gradient(#ebf2fc, #c3d7f3);
}
.tip {
  position: absolute;
  right: 427px;
  top: -4px;
  padding: 2px 3px 3px;
  border: 1px solid #000;
  background: #ffffdc;
  color: #000;
  box-shadow: 2px 3px 8px rgba(0, 0, 0, 0.35);
}
.status-tools { display: flex; align-self: stretch; padding: 3px 2px 3px 0; }
.done, .cell { display: flex; align-items: center; gap: 5px; border-left: 1px solid #97a3b5; padding: 0 9px 0 10px; }
.done { padding-left: 14px; }
.cell:last-child { gap: 11px; padding-right: 0; }
```

FILE: app.js
```js
// Times are in millions of picoseconds; every edge falls on an n.28 boundary.
const PX = 31.56;
const T140 = 97;
const ROW = 21;
const TOP = 13;
const x = t => Math.round(T140 + (t - 140) * PX) + 0.5;

const clk = [["*", 137.28]];
for (let t = 138.28, n = 0; t < 166; t += 1, n++) clk.push([String(n % 4), t]);
clk.push(["0", 167.28]);
for (let t = 168.28, n = 1; t < 185; t += 1, n++) clk.push([String(n % 4), t]);
clk.push(["2", Infinity]);

const signals = [
  { group: "iic" },
  { name: "iic_scl", icon: "port-out", value: "0", start: 0, edges: [138, 140, 142, 144, 146, 148, 150, 169, 171, 173, 175, 177, 179, 181, 183] },
  { name: "iic_sda", icon: "port-io", value: "0", start: 0, edges: [137, 145, 152, 167, 170, 174, 178, 182] },
  { group: "cnt" },
  { name: "cnt_bit[2:0]", icon: "reg", value: "0", bus: [["*", 137.28], ["6", 141.28], ["7", 145.28], ["0", 153.28], ["1", 157.28], ["2", 161.28], ["3", 165.28], ["4", 166.28], ["0", 174.28], ["1", 178.28], ["2", 182.28], ["3", Infinity]] },
  { name: "cnt_iic_clk[1:0]", icon: "reg", value: "3 -> 0", bus: clk },
  { group: "G3" },
  { name: "current_state[3:0]", icon: "reg", value: "SLAVE_ACK_4 -> STOP", picked: true, bus: [["WR_DATA", 145.28], ["SLAVE_ACK_4", 149.28], ["STOP", 165.28], ["ID*", 166.28], ["START_1", 170.28], ["SEND_DW_ADDR", Infinity]] },
  { name: "sda_en", icon: "port-out", value: "0 -> 1", start: 1, edges: [145, 149] },
  { name: "wr_data_buff", icon: "reg", value: "1 -> 0", start: 0, edges: [137, 149, 152, 167, 170, 174, 178, 182] },
  { name: "sda_in", icon: "reg", value: "0", start: 1, edges: [145, 149] },
  { name: "ack", icon: "reg", value: "0 -> 1", start: 1, edges: [145, 149] },
  { group: "G4", last: true }
];
// wr_data_buff is already high when the 149.28 edge arrives, so levels simply alternate.

document.getElementById("signals").innerHTML = signals.map(s => s.group
  ? `<li class="row group${s.last ? " last" : ""}">${s.last ? "" : '<i class="mark"></i>'}<span>${s.group}</span></li>`
  : `<li class="row${s.picked ? " picked" : ""}"><span class="ver">ver</span><svg width="15" height="15"><use href="#${s.icon}"/></svg><span class="name">${s.name}</span></li>`).join("");
document.getElementById("values").innerHTML = signals.map(s => `<li class="row">${(s.value || "").replace(">", "&gt;")}</li>`).join("");

const line = (cls, x1, y1, x2, y2) => `<path class="${cls}" d="M${x1} ${y1}L${x2} ${y2}"/>`;
const million = n => n ? `${n},000,000` : "0";

function drawBit(s, y, width) {
  let out = "", level = s.start, from = 1;
  const at = v => y + (v ? 3.5 : 19.5);
  for (const e of s.edges) {
    const to = x(e + 0.28);
    out += line(level ? "high" : "low", from, at(level), to, at(level));
    level = 1 - level;
    out += line(level ? "high" : "low", to, y + 3, to, y + 20);
    from = to;
  }
  return out + line(level ? "high" : "low", from, at(level), width - 1, at(level));
}

function drawBus(s, y, width) {
  let out = "", from = 1;
  const t = y + 3.5, b = y + 19.5;
  if (s.picked) out += `<rect x="0" y="${t}" width="${width}" height="16" fill="#606060"/>`;
  s.bus.forEach(([label, end]) => {
    const open = end === Infinity;
    const to = open ? width - 1 : x(end);
    const l = from === 1 ? from : from + 1;
    out += `<path class="bus" d="M${l} ${t}H${open ? to : to - 1}${open ? "" : `v4l1 1v6l-1 1v4`}M${l} ${b}H${open ? to : to - 1}${from === 1 ? "" : `M${l} ${t}v4l-1 1v6l1 1v4`}"/>`;
    out += `<text class="bus-label" x="${(from + to) / 2}" y="${y + 16}">${label}</text>`;
    from = to;
  });
  return out;
}

function draw() {
  const plot = document.getElementById("plot");
  const width = plot.clientWidth, height = plot.clientHeight;
  let out = signals.map((s, i) => s.group ? "" : (s.bus ? drawBus : drawBit)(s, TOP + i * ROW, width)).join("");
  out += line("marker", x(145.28), 0, x(145.28), height - 2) + line("cursor", x(149.28), 1, x(149.28), height - 2);
  out += `<rect class="note" x="442" y="20" width="58" height="81" rx="2"/><text class="note-label" x="535" y="70">stop</text>`;
  out += `<rect class="note" x="931" y="9" width="63" height="84" rx="2"/><text class="note-label" x="1020" y="60">start</text>`;
  plot.innerHTML = `<svg>${out}</svg>`;

  let r = "";
  for (let h = 0; x(137 + h / 2) < width - 3; h++) {
    const t = 137 + h / 2, major = t % 5 === 0;
    r += line("tick", x(t), major ? 0 : t % 1 ? 12 : 8, x(t), 16);
    if (major) r += `<text class="tick-label" x="${x(t) + 1}" y="12">${million(t)}</text>`;
  }
  r += `<path stroke="#d01010" d="M${x(145.28)} 0v16"/><path stroke="#10d010" d="M${x(149.28)} 0v16"/>`;
  document.getElementById("ruler").innerHTML = r;

  const scale = (width - 32) / 750;
  const ox = t => Math.round(9 + t * scale) + 0.5;
  let o = "";
  for (let t = 0; t <= 750; t += 10) {
    const major = t % 100 === 0;
    o += line("tick", ox(t), major ? 0 : t % 50 ? 12 : 7, ox(t), 17);
    if (major) o += `<text class="tick-label" x="${ox(t) + 1}" y="12">${million(t)}</text>`;
  }
  o += `<path stroke="#d01010" d="M${ox(145.28)} 0v17"/><path stroke="#10d010" d="M${ox(149.28)} 0v17"/>`;
  o += `<rect x="${width - 25}" y="0" width="15" height="15" fill="#4040c0"/>`;
  document.getElementById("overview").innerHTML = o;
}
draw();
window.addEventListener("resize", draw);
```
